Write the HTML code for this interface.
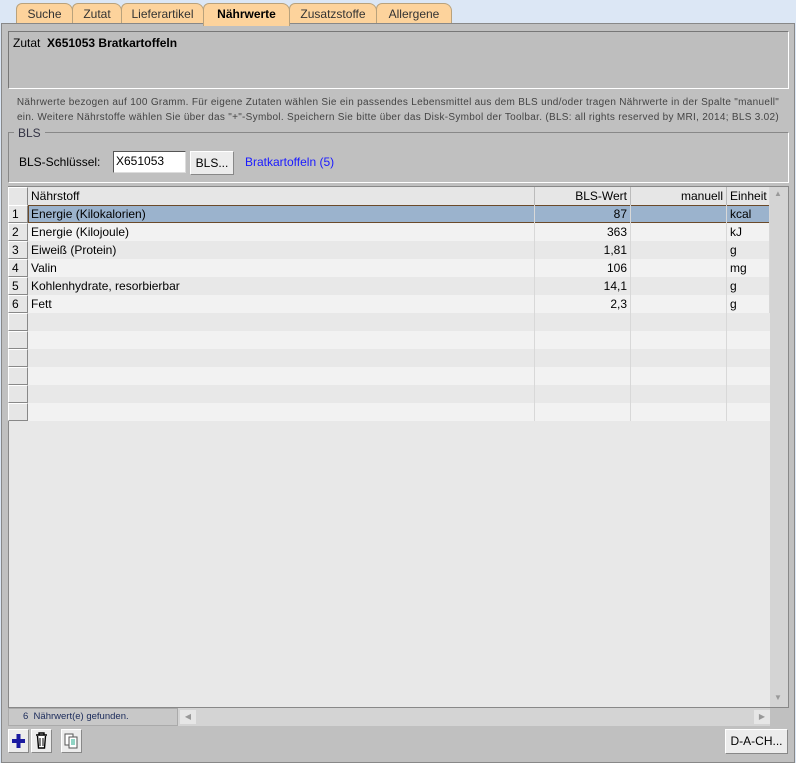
<!DOCTYPE html>
<html><head><meta charset="utf-8"><style>
*{box-sizing:border-box;margin:0;padding:0}
body{width:796px;height:763px;background:#dce7f5;font-family:"Liberation Sans",sans-serif;font-size:12px;color:#000;position:relative;overflow:hidden}
.a{position:absolute}
.tab{position:absolute;top:3px;height:21px;background:#fdd39c;border:1px solid #b9a27c;border-bottom:none;border-radius:6px 8px 0 0;text-align:center;line-height:21px;font-size:12px;color:#333}
.panel{left:1px;top:23px;width:794px;height:740px;background:#c0c0c0;border:1px solid #888}
.row{position:absolute;left:8px;width:762px;height:18px;font-size:12px;line-height:18px}
.c{position:absolute;top:0;height:18px;border-right:1px solid #d8d8d8;padding:0 3px}
.num{left:0;width:20px;background:#e6e6e6;border:1px solid #fff;border-right-color:#888;border-bottom-color:#888;padding-left:3px;line-height:16px}
.btn{position:absolute;background:#ececec;border:1px solid #888;border-top-color:#fff;border-left-color:#fff}
</style></head><body>
<div class="tab" style="left:16px;width:57px">Suche</div>
<div class="tab" style="left:72px;width:50px">Zutat</div>
<div class="tab" style="left:121px;width:83px">Lieferartikel</div>
<div class="tab" style="left:289px;width:88px">Zusatzstoffe</div>
<div class="tab" style="left:376px;width:76px">Allergene</div>
<div class="tab" style="left:203px;width:87px;font-weight:bold;color:#000;z-index:3;height:23px">Nährwerte</div>
<div class="a panel"></div>
<div class="a" style="left:8px;top:31px;width:781px;height:58px;border:1px solid #777;border-right-color:#fff;border-bottom-color:#fff;background:#bebebe;padding:4px 4px;font-size:12px">Zutat &nbsp;<b>X651053 Bratkartoffeln</b></div>
<div class="a" style="left:0px;top:95px;width:796px;text-align:center;font-size:10px;line-height:15px;color:#444;letter-spacing:0.3px;white-space:nowrap">Nährwerte bezogen auf 100 Gramm. Für eigene Zutaten wählen Sie ein passendes Lebensmittel aus dem BLS und/oder tragen Nährwerte in der Spalte "manuell"<br>ein. Weitere Nährstoffe wählen Sie über das "+"-Symbol. Speichern Sie bitte über das Disk-Symbol der Toolbar. (BLS: all rights reserved by MRI, 2014; BLS 3.02)</div>
<div class="a" style="left:8px;top:132px;width:781px;height:51px;border:1px solid #888;border-right-color:#fff;border-bottom-color:#fff"></div>
<div class="a" style="left:14px;top:126px;background:#c0c0c0;padding:0 4px;color:#334;font-size:12px;line-height:14px">BLS</div>
<div class="a" style="left:19px;top:155px">BLS-Schlüssel:</div>
<div class="a" style="left:113px;top:151px;width:73px;height:22px;background:#fff;border:1px solid #555;border-right-color:#ddd;border-bottom-color:#ddd;padding:2px 2px">X651053</div>
<div class="btn" style="left:190px;top:151px;width:44px;height:24px;text-align:center;line-height:22px">BLS...</div>
<div class="a" style="left:245px;top:155px;color:#1a1aff">Bratkartoffeln (5)</div>
<div class="a" style="left:8px;top:186px;width:781px;height:522px;background:#e8e8e8;border:1px solid #888"></div>
<div class="row" style="top:187px;height:19px;background:#e6e6e6">
<div class="c num" style="height:19px"></div>
<div class="c" style="left:20px;width:507px;border-right:1px solid #bbb">Nährstoff</div>
<div class="c" style="left:527px;width:96px;text-align:right;border-right:1px solid #bbb">BLS-Wert</div>
<div class="c" style="left:623px;width:96px;text-align:right;border-right:1px solid #bbb">manuell</div>
<div class="c" style="left:719px;width:43px">Einheit</div></div>
<div class="a" style="left:770px;top:187px;width:18px;height:520px;background:#d4d4d4"></div>
<div class="a" style="left:774px;top:189px;font-size:8px;color:#999">▲</div>
<div class="a" style="left:774px;top:693px;font-size:8px;color:#999">▼</div>

<div class="row" style="top:205px;background:#9bb3cd"><div class="c num">1</div><div class="a" style="left:20px;top:0;width:742px;height:18px;border:1px solid #6b4a2a"></div><div class="c" style="left:20px;width:507px">Energie (Kilokalorien)</div><div class="c" style="left:527px;width:96px;text-align:right">87</div><div class="c" style="left:623px;width:96px"></div><div class="c" style="left:719px;width:43px">kcal</div></div>
<div class="row" style="top:223px;background:#f2f2f2"><div class="c num">2</div><div class="c" style="left:20px;width:507px">Energie (Kilojoule)</div><div class="c" style="left:527px;width:96px;text-align:right">363</div><div class="c" style="left:623px;width:96px"></div><div class="c" style="left:719px;width:43px">kJ</div></div>
<div class="row" style="top:241px;background:#e8e8e8"><div class="c num">3</div><div class="c" style="left:20px;width:507px">Eiweiß (Protein)</div><div class="c" style="left:527px;width:96px;text-align:right">1,81</div><div class="c" style="left:623px;width:96px"></div><div class="c" style="left:719px;width:43px">g</div></div>
<div class="row" style="top:259px;background:#f2f2f2"><div class="c num">4</div><div class="c" style="left:20px;width:507px">Valin</div><div class="c" style="left:527px;width:96px;text-align:right">106</div><div class="c" style="left:623px;width:96px"></div><div class="c" style="left:719px;width:43px">mg</div></div>
<div class="row" style="top:277px;background:#e8e8e8"><div class="c num">5</div><div class="c" style="left:20px;width:507px">Kohlenhydrate, resorbierbar</div><div class="c" style="left:527px;width:96px;text-align:right">14,1</div><div class="c" style="left:623px;width:96px"></div><div class="c" style="left:719px;width:43px">g</div></div>
<div class="row" style="top:295px;background:#f2f2f2"><div class="c num">6</div><div class="c" style="left:20px;width:507px">Fett</div><div class="c" style="left:527px;width:96px;text-align:right">2,3</div><div class="c" style="left:623px;width:96px"></div><div class="c" style="left:719px;width:43px">g</div></div>
<div class="row" style="top:313px;background:#e8e8e8"><div class="c num"></div><div class="c" style="left:20px;width:507px"></div><div class="c" style="left:527px;width:96px"></div><div class="c" style="left:623px;width:96px"></div></div>
<div class="row" style="top:331px;background:#f2f2f2"><div class="c num"></div><div class="c" style="left:20px;width:507px"></div><div class="c" style="left:527px;width:96px"></div><div class="c" style="left:623px;width:96px"></div></div>
<div class="row" style="top:349px;background:#e8e8e8"><div class="c num"></div><div class="c" style="left:20px;width:507px"></div><div class="c" style="left:527px;width:96px"></div><div class="c" style="left:623px;width:96px"></div></div>
<div class="row" style="top:367px;background:#f2f2f2"><div class="c num"></div><div class="c" style="left:20px;width:507px"></div><div class="c" style="left:527px;width:96px"></div><div class="c" style="left:623px;width:96px"></div></div>
<div class="row" style="top:385px;background:#e8e8e8"><div class="c num"></div><div class="c" style="left:20px;width:507px"></div><div class="c" style="left:527px;width:96px"></div><div class="c" style="left:623px;width:96px"></div></div>
<div class="row" style="top:403px;background:#f2f2f2"><div class="c num"></div><div class="c" style="left:20px;width:507px"></div><div class="c" style="left:527px;width:96px"></div><div class="c" style="left:623px;width:96px"></div></div>

<div class="a" style="left:8px;top:708px;width:170px;height:18px;background:#c8c8c8;border:1px solid #aaa;font-size:9.5px;color:#1a2a5a;line-height:16px;padding-left:14px">6 &nbsp;Nährwert(e) gefunden.</div>
<div class="a" style="left:178px;top:708px;width:592px;height:18px;background:#d4d4d4"></div>
<div class="a" style="left:180px;top:710px;width:16px;height:14px;background:#e6e6e6;font-size:8px;color:#999;text-align:center;line-height:14px">◀</div>
<div class="a" style="left:754px;top:710px;width:16px;height:14px;background:#e6e6e6;font-size:8px;color:#999;text-align:center;line-height:14px">▶</div>

<div class="btn" style="left:8px;top:729px;width:21px;height:24px"><svg width="19" height="22" viewBox="0 0 19 22"><path d="M9.5 4v14M3 11h13" stroke="#1a1aa0" stroke-width="4"/></svg></div>
<div class="btn" style="left:31px;top:729px;width:21px;height:24px"><svg width="19" height="22" viewBox="0 0 19 22"><path d="M4 5h11M7 5V3h5v2M5.5 6l1 12h6l1-12" fill="#fff" stroke="#000" stroke-width="1.4"/><path d="M8 8v8M11 8v8" stroke="#000"/></svg></div>
<div class="btn" style="left:61px;top:729px;width:21px;height:24px"><svg width="19" height="22" viewBox="0 0 19 22"><rect x="3" y="4" width="8" height="11" fill="#fff" stroke="#555"/><rect x="7" y="7" width="8" height="11" fill="#fff" stroke="#555"/><path d="M9 10h4M9 12h4M9 14h4" stroke="#2a8"/></svg></div>
<div class="btn" style="left:725px;top:729px;width:63px;height:25px;text-align:center;line-height:23px;font-size:12px">D-A-CH...</div>
</body></html>
